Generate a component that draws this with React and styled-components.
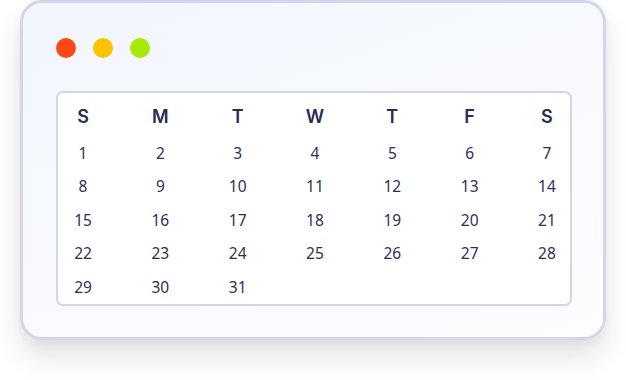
import styled, { createGlobalStyle } from "styled-components";

const GlobalStyle = createGlobalStyle`
  body {
    margin: 0;
    background: #ffffff;
    font-family: "Noto Sans", "Liberation Sans", sans-serif;
  }
`;

const Page = styled.div`
  width: 626px;
  height: 380px;
  padding: 0 0 0 20px;
  box-sizing: border-box;
`;

const Window = styled.div`
  width: 586px;
  box-sizing: border-box;
  border: 3px solid #d3d5ea;
  border-radius: 22px;
  background: linear-gradient(160deg, #f2f6fd 0%, #f8fafe 55%, #fcfdff 100%);
  box-shadow: 0 18px 28px rgba(40, 40, 60, 0.12), 0 4px 10px rgba(40, 40, 60, 0.05);
  padding: 35px 31px 31px 33px;
  display: flex;
  flex-direction: column;
  gap: 33px;
`;

const Dots = styled.div`
  display: flex;
  gap: 17px;
`;

const Dot = styled.span`
  width: 20px;
  height: 20px;
  border-radius: 50%;
  background: ${(p) => p.color};
`;

const Calendar = styled.div`
  background: #ffffff;
  border: 2px solid #d3d5ea;
  border-radius: 7px;
  padding: 3px 8px 0 10px;
  display: grid;
  grid-template-columns: repeat(7, 30px);
  grid-template-rows: 40px repeat(5, 33.5px);
  justify-content: space-between;
`;

const DayName = styled.div`
  display: flex;
  align-items: center;
  justify-content: center;
  font-family: "Inter", "Noto Sans", sans-serif;
  font-weight: 600;
  font-size: 18px;
  color: #2a2c52;
`;

const DayNum = styled.div`
  display: flex;
  align-items: center;
  justify-content: center;
  font-size: 15.5px;
  color: #2e3055;
`;

const days = ["S", "M", "T", "W", "T", "F", "S"];
const nums = Array.from({ length: 31 }, (_, i) => i + 1);

export default function App() {
  return (
    <Page>
      <GlobalStyle />
      <Window>
        <Dots>
          <Dot color="#ff4a17" />
          <Dot color="#ffc300" />
          <Dot color="#a6e806" />
        </Dots>
        <Calendar>
          {days.map((d, i) => (
            <DayName key={i}>{d}</DayName>
          ))}
          {nums.map((n) => (
            <DayNum key={n}>{n}</DayNum>
          ))}
        </Calendar>
      </Window>
    </Page>
  );
}
